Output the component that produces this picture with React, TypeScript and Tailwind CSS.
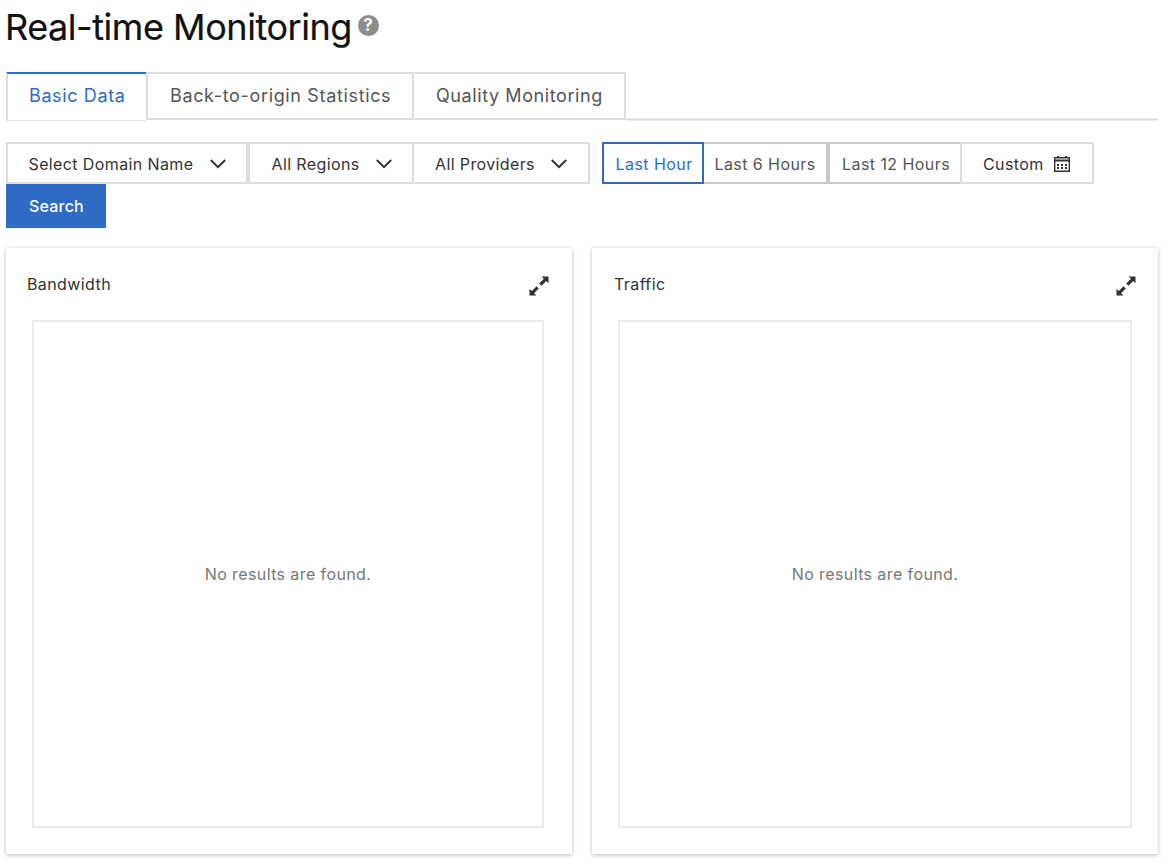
import React from "react";

function Chevron() {
  return (
    <svg className="shrink-0" width="16" height="10" viewBox="0 0 16 10" fill="none" stroke="#333" strokeWidth="2">
      <path d="M.8 1 8 8.2 15.2 1" />
    </svg>
  );
}

function CalendarIcon() {
  return (
    <svg width="16" height="16" viewBox="0 0 16 16" fill="#333">
      <path fillRule="evenodd" d="M0 1h3V0h2v1h6V0h2v1h3v15H0zM1.400 2.400v1.200h13.200V2.400zM1.400 5.500v9h13.200v-9z" />
      <path d="M3 8h2v2H3zM7 8h2v2H7zM11 8h2v2h-2zM3 11h2v2H3zM7 11h2v2H7zM11 11h2v2h-2z" />
    </svg>
  );
}

function ExpandIcon() {
  return (
    <svg width="20" height="20" viewBox="0 0 20 20" fill="#333">
      <path d="M12.500 .5h7v6.800l-2.300-2.300-4.700 4.700-2.300-2.300 4.700-4.700z" />
      <path d="M7.500 19.500h-7v-6.800l2.300 2.300 4.700-4.700 2.300 2.300-4.700 4.700z" />
    </svg>
  );
}

interface PanelProps {
  title: string;
  className: string;
  headerClass: string;
  bodyClass: string;
}

function Panel({ title, className, headerClass, bodyClass }: PanelProps) {
  return (
    <section className={`flex h-[606px] flex-col bg-white shadow-[0_1px_4px_rgba(0,0,0,0.28)] ${className}`}>
      <header className={`flex h-[72px] items-start justify-between ${headerClass}`}>
        <h2 className="mt-[24px] text-[16px] leading-6 tracking-[0.4px] text-[#333]">{title}</h2>
        <button className="mt-[28px]" aria-label="Expand">
          <ExpandIcon />
        </button>
      </header>
      <div className={`mb-[26px] ml-[26px] flex flex-1 items-center justify-center border-2 border-[#ebebeb] text-[16px] tracking-[0.4px] text-[#777] ${bodyClass}`}>
        No results are found.
      </div>
    </section>
  );
}

export default function App() {
  return (
    <main className="h-[866px] w-[1170px] overflow-hidden bg-white pl-[6px] font-['Inter',sans-serif] whitespace-nowrap">
      <header className="flex h-[72px] items-start">
        <h1 className="-ml-px mt-[5px] w-[352.500px] text-[36px] leading-[44px] tracking-[-0.45px] text-[#111] [-webkit-text-stroke:0.2px_#111]">Real-time Monitoring</h1>
        <span className="mt-[15px] flex size-[21px] items-center justify-center rounded-full bg-[#8c8c8c] text-[17px] leading-none font-bold text-white">?</span>
      </header>

      <nav className="flex h-[49px] w-[1152px] text-[18px] leading-[44px] tracking-[0.62px] text-[#555]">
        <div className="w-[140px] border-t-2 border-b border-l-2 border-t-[#2d6bc9] border-b-[#e8e8e8] border-l-[#ddd] pl-[21px] text-[#2d6bc9]">Basic Data</div>
        <div className="h-12 w-[266px] border-2 border-r-0 border-[#ddd] pl-[22px] tracking-[0.65px]">Back-to-origin Statistics</div>
        <div className="h-12 w-[214px] border-2 border-[#ddd] pl-[22px] tracking-[0.59px]">Quality Monitoring</div>
        <div className="mt-[46px] h-[3px] flex-1 border-y border-[#ebebeb] bg-[#ddd]" />
      </nav>

      <div className="mt-[21px] flex h-[42px] text-[16px] leading-[38px] tracking-[0.38px] text-[#333]">
        <div className="flex w-[242px] justify-between border-2 border-[#ddd] pt-px pr-[20.500px] pl-[20.500px] [&>svg]:mt-[14px]">Select Domain Name<Chevron /></div>
        <div className="flex w-[164px] justify-between border-2 border-r-0 border-[#ddd] pt-px pr-[20.500px] pl-[21.500px] [&>svg]:mt-[14px]">All Regions<Chevron /></div>
        <div className="flex w-[178px] justify-between border-2 border-[#ddd] pt-px pr-[21px] pl-[21px] [&>svg]:mt-[14px]">All Providers<Chevron /></div>
        <div className="ml-[12px] w-[102px] border-2 border-[#2d6bc9] pt-px pl-[11.500px] tracking-[0.45px] text-[#2d6bc9]">Last Hour</div>
        <div className="w-[124px] border-2 border-l-0 border-[#c8c8c8] pt-px pl-[10.500px] tracking-[0.42px] text-[#555]">Last 6 Hours</div>
        <div className="w-[132px] border-2 border-r-0 border-[#c8c8c8] pt-px pl-[12px] tracking-[0.44px] text-[#555]">Last 12 Hours</div>
        <div className="flex w-[134px] justify-between border-2 border-[#ddd] pt-px pr-[22px] pl-[21px] tracking-[0.4px] [&>svg]:mt-[11px]">Custom<CalendarIcon /></div>
      </div>
      <button className="block h-11 w-[100px] bg-[#2d6bc5] pl-px text-[16px] font-medium tracking-[0.2px] text-white">Search</button>

      <div className="mt-5 flex">
        <Panel title="Bandwidth" className="w-[566px]" headerClass="pr-[23px] pl-[21px]" bodyClass="mr-[28px]" />
        <Panel title="Traffic" className="ml-5 w-[566px]" headerClass="pr-[22px] pl-[22px]" bodyClass="mr-[26px]" />
      </div>
    </main>
  );
}
